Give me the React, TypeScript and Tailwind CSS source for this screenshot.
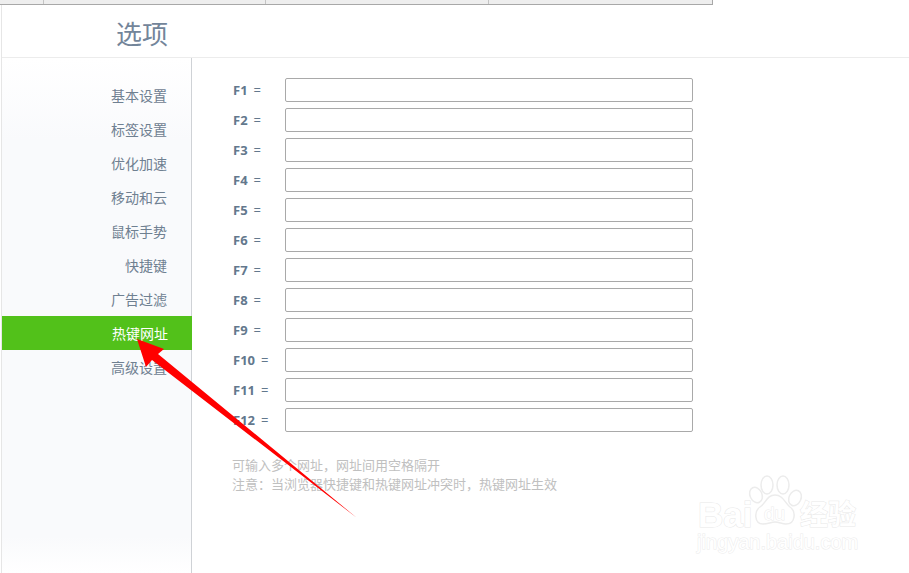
const menu = ["基本设置", "标签设置", "优化加速", "移动和云", "鼠标手势", "快捷键", "广告过滤", "热键网址", "高级设置"];
const keys = ["F1", "F2", "F3", "F4", "F5", "F6", "F7", "F8", "F9", "F10", "F11", "F12"];
const cjk = "font-['Noto_Sans_CJK_SC',sans-serif]";

function Arrow() {
  return (
    <svg className="absolute left-0 top-0 pointer-events-none" width="909" height="573" viewBox="0 0 909 573">
      <polygon points="137,339 164,349 158,354 357,518 152,360 146,367" fill="#ff0000" />
    </svg>
  );
}

function Watermark() {
  return (
    <div className="absolute left-[696px] top-[474px] w-[170px] h-[90px] text-white">
      <svg className="absolute left-0 top-0" width="170" height="60" viewBox="0 0 170 60" fill="#fff" stroke="#ececec" strokeWidth="1.5">
        <ellipse cx="60" cy="21" rx="6" ry="8" transform="rotate(-25 60 21)" />
        <ellipse cx="71" cy="11" rx="6" ry="9" />
        <ellipse cx="87" cy="11" rx="6" ry="9" />
        <ellipse cx="99" cy="24" rx="6" ry="8" transform="rotate(25 99 24)" />
        <path d="M79 21c8 0 10 8 15 12 6 4 6 17-4 17-4 0-7-2-11-2s-7 2-12 2c-9 0-9-13-3-17 6-4 7-12 15-12z" />
      </svg>
      <span className="absolute left-[2px] top-[26px] font-['Liberation_Sans',sans-serif] font-bold text-[35px] leading-[30px] [-webkit-text-stroke:1px_#e8e8e8] [paint-order:stroke_fill]">Bai</span>
      <span className="absolute left-[68px] top-[30px] font-['Liberation_Sans',sans-serif] text-[19px] leading-none [-webkit-text-stroke:1px_#ececec] [paint-order:stroke_fill]">du</span>
      <span className={`absolute left-[104px] top-[23px] ${cjk} font-bold text-[28px] leading-[32px] [-webkit-text-stroke:1px_#e8e8e8] [paint-order:stroke_fill]`}>经验</span>
      <span className="absolute left-[1px] top-[58px] font-['Liberation_Sans',sans-serif] text-[20px] leading-none whitespace-nowrap [-webkit-text-stroke:1px_#ececec] [paint-order:stroke_fill]">jingyan.baidu.com</span>
    </div>
  );
}

export default function App() {
  return (
    <div className={`relative w-[909px] h-[573px] overflow-hidden bg-white ${cjk}`}>
      <div className="w-[713px] h-[5px] bg-[#eeeeee] border-b border-r border-[#a8a8a8] flex">
        <div className="w-[44px] border-r border-[#c4c4c4]" />
        <div className="w-[222px] border-r border-[#c4c4c4]" />
        <div className="w-[223px] border-r border-[#c4c4c4]" />
      </div>
      <div className="h-[568px] ml-px border-l border-[#e6e6e6] flex flex-col">
        <header className="h-[53px] border-b border-[#ececec] pl-[114px] text-[26px] leading-[55px] text-[#73859a]">选项</header>
        <div className="flex flex-1 min-h-0">
          <aside className="w-[190px] border-r border-[#cfd2d6] pt-[20px] bg-[linear-gradient(#ffffff_0%,#f9fafc_16%,#f9fafc_93%,#ffffff_100%)]">
            {menu.map((name) => (
              <div
                key={name}
                className={`h-[34px] pr-[24px] text-right text-[14px] leading-[35px] ${
                  name === "热键网址" ? "bg-[#52c11a] text-white w-[190px]" : "text-[#6f8091]"
                }`}
              >
                {name}
              </div>
            ))}
          </aside>
          <main className="pl-[41px] pt-[20px] flex-1">
            <div className="flex flex-col gap-[6px]">
              {keys.map((key) => (
                <div key={key} className="flex items-center h-[24px]">
                  <label className="w-[52px] flex gap-[6px] pt-[1px] font-['Noto_Sans',sans-serif] text-[13px] text-[#63788d]">
                    <b>{key}</b>
                    <span>=</span>
                  </label>
                  <input className="w-[408px] h-[24px] bg-white border border-[#a9a9a9] rounded-[2px]" />
                </div>
              ))}
            </div>
            <p className="mt-[23px] -ml-px text-[13px] leading-[19px] text-[#c0c0c0]">
              可输入多个网址，网址间用空格隔开
              <br />
              注意：当浏览器快捷键和热键网址冲突时，热键网址生效
            </p>
          </main>
        </div>
      </div>
      <Arrow />
      <Watermark />
    </div>
  );
}
